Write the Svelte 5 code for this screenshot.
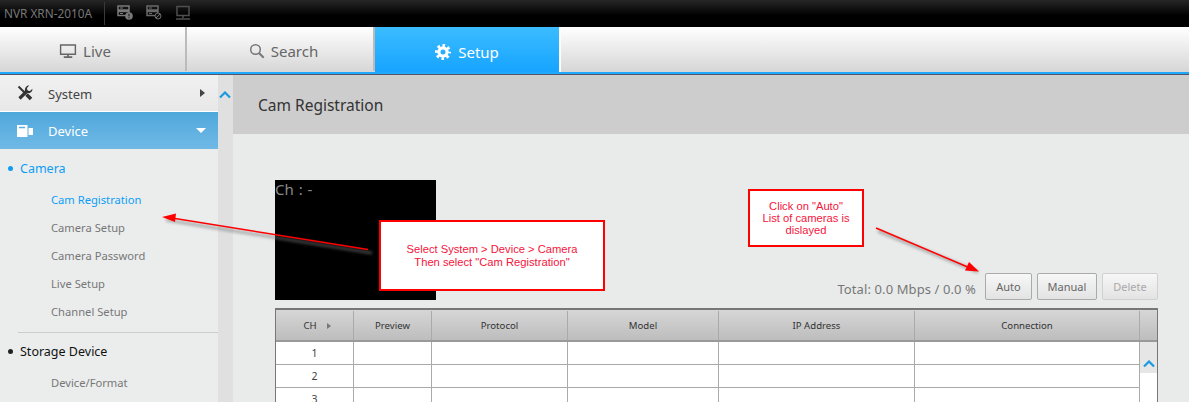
<script>
  const cameraItems = [
    { label: 'Cam Registration', active: true },
    { label: 'Camera Setup' },
    { label: 'Camera Password' },
    { label: 'Live Setup' },
    { label: 'Channel Setup' }
  ];
  const columns = ['Preview', 'Protocol', 'Model', 'IP Address', 'Connection'];
  const rows = [1, 2, 3];
</script>

<div class="page">
  <header class="topbar">
    <span class="model">NVR XRN-2010A</span>
    <span class="divider"></span>
    <svg class="status" width="16" height="16" viewBox="0 0 16 16">
      <path d="M1 1h11v4H1zM1 6.500h11v4H1z" fill="none" stroke="#7a7a7a" stroke-width="1.500" />
      <path d="M3 3h3M3 8.500h3" stroke="#7a7a7a" />
      <circle cx="12" cy="11" r="3.800" fill="#7a7a7a" />
      <path d="M12 8.800v2.600M12 12.300v1" stroke="#111" />
    </svg>
    <svg class="status" width="16" height="16" viewBox="0 0 16 16">
      <path d="M1 1h11v4H1zM1 6.500h11v4H1z" fill="none" stroke="#6a6a6a" stroke-width="1.500" />
      <path d="M3 3h3M3 8.500h3" stroke="#6a6a6a" />
      <circle cx="12" cy="11" r="3" fill="#111" stroke="#6a6a6a" />
      <path d="M10 13l4-4" stroke="#6a6a6a" />
    </svg>
    <svg class="status" width="16" height="16" viewBox="0 0 16 16">
      <path d="M2 1.500h12v9H2z" fill="none" stroke="#4f4f4f" stroke-width="1.500" />
      <path d="M8 11v2M1 14h14" stroke="#4f4f4f" stroke-width="1.500" />
    </svg>
  </header>

  <nav class="tabs">
    <div class="tab live">
      <svg width="18" height="16" viewBox="0 0 19 16">
        <path d="M1.700 1.700h15.600v9.800H1.700z" fill="none" stroke="#666" stroke-width="1.500" />
        <path d="M9.500 11.500v2.500M5 14.500h9" stroke="#666" stroke-width="1.800" />
      </svg>
      Live
    </div>
    <div class="tab search">
      <svg width="16" height="16" viewBox="0 0 16 16">
        <circle cx="6.500" cy="6.500" r="4.800" fill="none" stroke="#777" stroke-width="1.500" />
        <path d="M10 10l4.700 4.700" stroke="#777" stroke-width="2" />
      </svg>
      Search
    </div>
    <div class="tab selected">
      <svg width="16" height="16" viewBox="0 0 16 16">
        <circle cx="8" cy="8" r="6.500" fill="none" stroke="#fff" stroke-width="3" stroke-dasharray="2.550 2.550" stroke-dashoffset="1.270" />
        <circle cx="8" cy="8" r="4.100" fill="none" stroke="#fff" stroke-width="3.200" />
      </svg>
      Setup
    </div>
  </nav>

  <div class="body">
    <aside class="sidebar">
      <div class="menu system">
        <svg width="16" height="16" viewBox="0 0 16 16">
          <!-- screwdriver -->
          <path d="M1.500 1.500L9 9" stroke="#333" stroke-width="2" />
          <path d="M9.500 9.500L14 14" stroke="#333" stroke-width="3.600" />
          <!-- wrench -->
          <path d="M2.500 13.500L10.500 5.500" stroke="#333" stroke-width="3.200" />
          <path d="M12.200 .6L10 3l.4 2.600 2.600.4 2.400-2.200c.3 2.600-1.800 5-5 4.300L8 6.600C7.300 3 9.700.3 12.200.6z" fill="#333" />
        </svg>
        <span class="menu-label">System</span>
        <span class="caret-right"></span>
      </div>
      <div class="menu device">
        <svg width="16" height="12" viewBox="0 0 16 12">
          <path d="M0 0h10.500v12H0z" fill="#fff" />
          <path d="M2 2.500h6" stroke="#5aaee0" stroke-width="1.500" />
          <path d="M11.500 3H16v7h-4.500z" fill="#fff" />
        </svg>
        <span class="menu-label">Device</span>
        <span class="caret-down"></span>
      </div>

      <div class="group current"><i></i>Camera</div>
      <ul>
        {#each cameraItems as item}
          <li class:active={item.active}>{item.label}</li>
        {/each}
      </ul>
      <div class="rule"></div>
      <div class="group"><i></i>Storage Device</div>
      <ul>
        <li>Device/Format</li>
      </ul>
    </aside>

    <div class="rail">
      <svg class="chevron" width="12" height="8" viewBox="0 0 12 8">
        <path d="M1 6.500l5-5 5 5" fill="none" stroke="#1a9be0" stroke-width="2.200" />
      </svg>
    </div>

    <main>
      <h1>Cam Registration</h1>
      <section class="content">
        <div class="controls">
          <div class="preview">Ch : -</div>
          <div class="actions">
            <span class="total">Total: 0.0 Mbps / 0.0 %</span>
            <button class="auto">Auto</button>
            <button class="manual">Manual</button>
            <button class="delete" disabled>Delete</button>
          </div>
        </div>

        <div class="table">
          <div class="head">
            <div class="cell">CH <span class="sort"></span></div>
            {#each columns as column}
              <div class="cell">{column}</div>
            {/each}
            <div class="cell"></div>
          </div>
          <div class="grid-wrap">
            <div class="rows">
              {#each rows as row}
                <div class="row">
                  <div class="cell">{row}</div>
                  {#each columns as column}
                    <div class="cell"></div>
                  {/each}
                </div>
              {/each}
            </div>
            <div class="scroll">
              <div class="scroll-up">
                <svg width="12" height="8" viewBox="0 0 12 8">
                  <path d="M1 6.500l5-5 5 5" fill="none" stroke="#1a9be0" stroke-width="2.200" />
                </svg>
              </div>
            </div>
          </div>
        </div>
      </section>
    </main>
  </div>

  <!-- annotations drawn on top of the screenshot -->
  <svg class="arrows" width="1189" height="402" viewBox="0 0 1189 402">
    <defs>
      <filter id="soft" x="-10%" y="-50%" width="120%" height="250%">
        <feGaussianBlur stdDeviation="1.500" />
      </filter>
    </defs>
    <g filter="url(#soft)" opacity="0.55">
      <path d="M166 220L372 253" stroke="#777" stroke-width="3" />
      <path d="M878 231L978 272" stroke="#777" stroke-width="3" />
    </g>
    <path d="M172 218L368 249.500" stroke="#f00" stroke-width="1.500" />
    <path d="M162 217L176 213.500 175 222z" fill="#f00" />
    <path d="M876 228L970 268" stroke="#f00" stroke-width="1.500" />
    <path d="M979 271.500L965 270.500 969 262z" fill="#f00" />
  </svg>
  <div class="callout select">Select System &gt; Device &gt; Camera<br />Then select "Cam Registration"</div>
  <div class="callout click">Click on "Auto"<br />List of cameras is<br />dislayed</div>
</div>

<style>
  :global(body) {
    margin: 0;
  }
  .page {
    position: relative;
    width: 1189px;
    height: 402px;
    overflow: hidden;
    background: #e9ebea;
    font-family: "Noto Sans", "DejaVu Sans", sans-serif;
    color: #555;
  }
  .topbar {
    display: flex;
    align-items: center;
    height: 27px;
    box-sizing: border-box;
    padding-left: 4px;
    background: linear-gradient(#262626, #000 60%);
    border-bottom: 1px solid #000;
  }
  .model {
    font-size: 11.800px;
    color: #777;
    width: 100px;
  }
  .divider {
    width: 1px;
    height: 23px;
    background: #3a3a3a;
    margin-right: 12px;
  }
  .status {
    margin-right: 13px;
  }
  .tabs {
    display: flex;
    height: 47px;
    box-sizing: border-box;
    background: linear-gradient(#fff, #d6d6d6);
    border-bottom: 2px solid #1ea8fc;
    box-shadow: 0 1px 0 #556;
  }
  .tab {
    display: flex;
    align-items: center;
    justify-content: center;
    gap: 6px;
    box-sizing: border-box;
    width: 187px;
    height: 44px;
    padding-top: 4px;
    font-size: 15px;
    color: #666;
    border-right: 2px solid #bbb;
  }
  .tab.live {
    padding-right: 15px;
  }
  .tab.search {
    width: 188px;
    padding-left: 7px;
  }
  .tab.selected {
    height: 45px;
    width: 186px;
    gap: 7px;
    color: #fff;
    background: linear-gradient(#3bbcff, #17a4ff);
    border-right: 2px solid #fff;
  }
  .body {
    display: flex;
    margin-top: 1px;
  }
  .sidebar {
    width: 218px;
    flex: none;
    background: #ebeded;
    height: 330px;
  }
  .menu {
    display: flex;
    align-items: center;
    font-size: 13px;
    box-sizing: border-box;
    padding-left: 17px;
  }
  .menu-label {
    margin-left: 15px;
    padding-top: 1px;
    flex: 1;
  }
  .system {
    height: 37px;
    color: #444;
    background: linear-gradient(#f1f1f1, #e8e8e8);
    border-bottom: 1px solid #fff;
  }
  .device {
    height: 37px;
    color: #fff;
    background: linear-gradient(#4fa8db, #70b9e6);
  }
  .caret-right {
    margin-right: 13px;
    border-left: 5px solid #444;
    border-top: 4px solid transparent;
    border-bottom: 4px solid transparent;
  }
  .caret-down {
    margin-right: 12px;
    border-top: 5px solid #fff;
    border-left: 5px solid transparent;
    border-right: 5px solid transparent;
  }
  .group {
    display: flex;
    align-items: center;
    height: 19px;
    margin-top: 10px;
    padding-left: 8px;
    font-size: 12.500px;
    color: #111;
  }
  .group i {
    width: 5px;
    height: 5px;
    border-radius: 50%;
    background: #222;
    margin-right: 7px;
  }
  .group.current {
    color: #0d9df5;
  }
  .group.current i {
    background: #0d9df5;
  }
  ul {
    list-style: none;
    margin: 8px 0 0;
    padding: 0 0 0 51px;
  }
  li {
    height: 28px;
    line-height: 28px;
    font-size: 11.200px;
    color: #777;
  }
  li.active {
    color: #0d9df5;
  }
  .rule {
    height: 1px;
    background: #ccc;
    margin: 6px 0 0 18px;
  }
  .rule + .group {
    margin-top: 9px;
  }
  .rail {
    width: 15px;
    flex: none;
    background: #e0e0e0;
    text-align: center;
  }
  .chevron {
    display: block;
    margin: 16px 0 0 1px;
  }
  main {
    flex: 1;
    min-width: 0;
  }
  h1 {
    margin: 0;
    height: 59px;
    line-height: 60px;
    padding-left: 25px;
    background: #cdcdcd;
    font-size: 15.500px;
    font-weight: 400;
    color: #333;
  }
  .content {
    padding: 46px 31px 0 42px;
  }
  .controls {
    display: flex;
    align-items: flex-end;
    justify-content: space-between;
    height: 120px;
  }
  .preview {
    width: 161px;
    height: 120px;
    box-sizing: border-box;
    background: #000;
    color: #8a8a8a;
    font-size: 15px;
    line-height: 19px;
    word-spacing: 1px;
  }
  .actions {
    display: flex;
    align-items: center;
    gap: 5px;
  }
  .total {
    font-size: 13px;
    color: #777;
    margin-right: 4px;
    padding-top: 4px;
    letter-spacing: 0.1px;
  }
  button {
    height: 27px;
    box-sizing: border-box;
    padding: 0;
    font-family: inherit;
    font-size: 11px;
    color: #666;
    background: linear-gradient(#f7f7f7, #e3e3e3);
    border: 1px solid #aaa;
    border-radius: 2px;
  }
  .auto {
    width: 47px;
  }
  .manual {
    width: 60px;
  }
  .delete {
    width: 56px;
    color: #aaa;
    border-color: #d0d0d0;
  }
  .table {
    margin-top: 8px;
    border-left: 1px solid #777;
    border-right: 1px solid #777;
    border-top: 2px solid #777;
    background: #fff;
    font-size: 9.600px;
  }
  .head,
  .row {
    display: grid;
    grid-template-columns: 78px 78px 136px 151px 196px 225px;
  }
  .head {
    grid-template-columns: 78px 78px 136px 151px 196px 225px 1fr;
    height: 32px;
    padding-top: 1px;
    background: linear-gradient(#d6d6d6, #bdbdbd);
    border-bottom: 2px solid #999;
    box-sizing: border-box;
    color: #333;
  }
  .cell {
    display: flex;
    align-items: center;
    justify-content: center;
    border-right: 1px solid #aaa;
    gap: 10px;
  }
  .head .cell:first-child {
    padding-left: 5px;
  }
  .head .cell:last-child {
    border-right: 0;
  }
  .sort {
    border-left: 4px solid #777;
    border-top: 3px solid transparent;
    border-bottom: 3px solid transparent;
  }
  .grid-wrap {
    display: flex;
  }
  .rows {
    width: 864px;
  }
  .row {
    height: 23px;
    box-sizing: border-box;
    border-bottom: 1px solid #aaa;
    color: #444;
    font-size: 10.500px;
  }
  .scroll {
    flex: 1;
  }
  .scroll-up {
    height: 31px;
    box-sizing: border-box;
    padding-top: 12px;
    background: #e6e6e6;
    display: flex;
    align-items: center;
    justify-content: center;
  }
  .arrows {
    position: absolute;
    left: 0;
    top: 0;
    pointer-events: none;
  }
  .callout {
    position: absolute;
    box-sizing: border-box;
    display: flex;
    align-items: center;
    justify-content: center;
    text-align: center;
    background: #fff;
    border: 2px solid #f00;
    color: #f4143c;
    font-family: "Liberation Sans", Arial, sans-serif;
    font-size: 11.200px;
    line-height: 12.300px;
  }
  .select {
    left: 379px;
    top: 220px;
    width: 226px;
    height: 71px;
  }
  .click {
    left: 748px;
    top: 189px;
    width: 116px;
    height: 58px;
  }
</style>
